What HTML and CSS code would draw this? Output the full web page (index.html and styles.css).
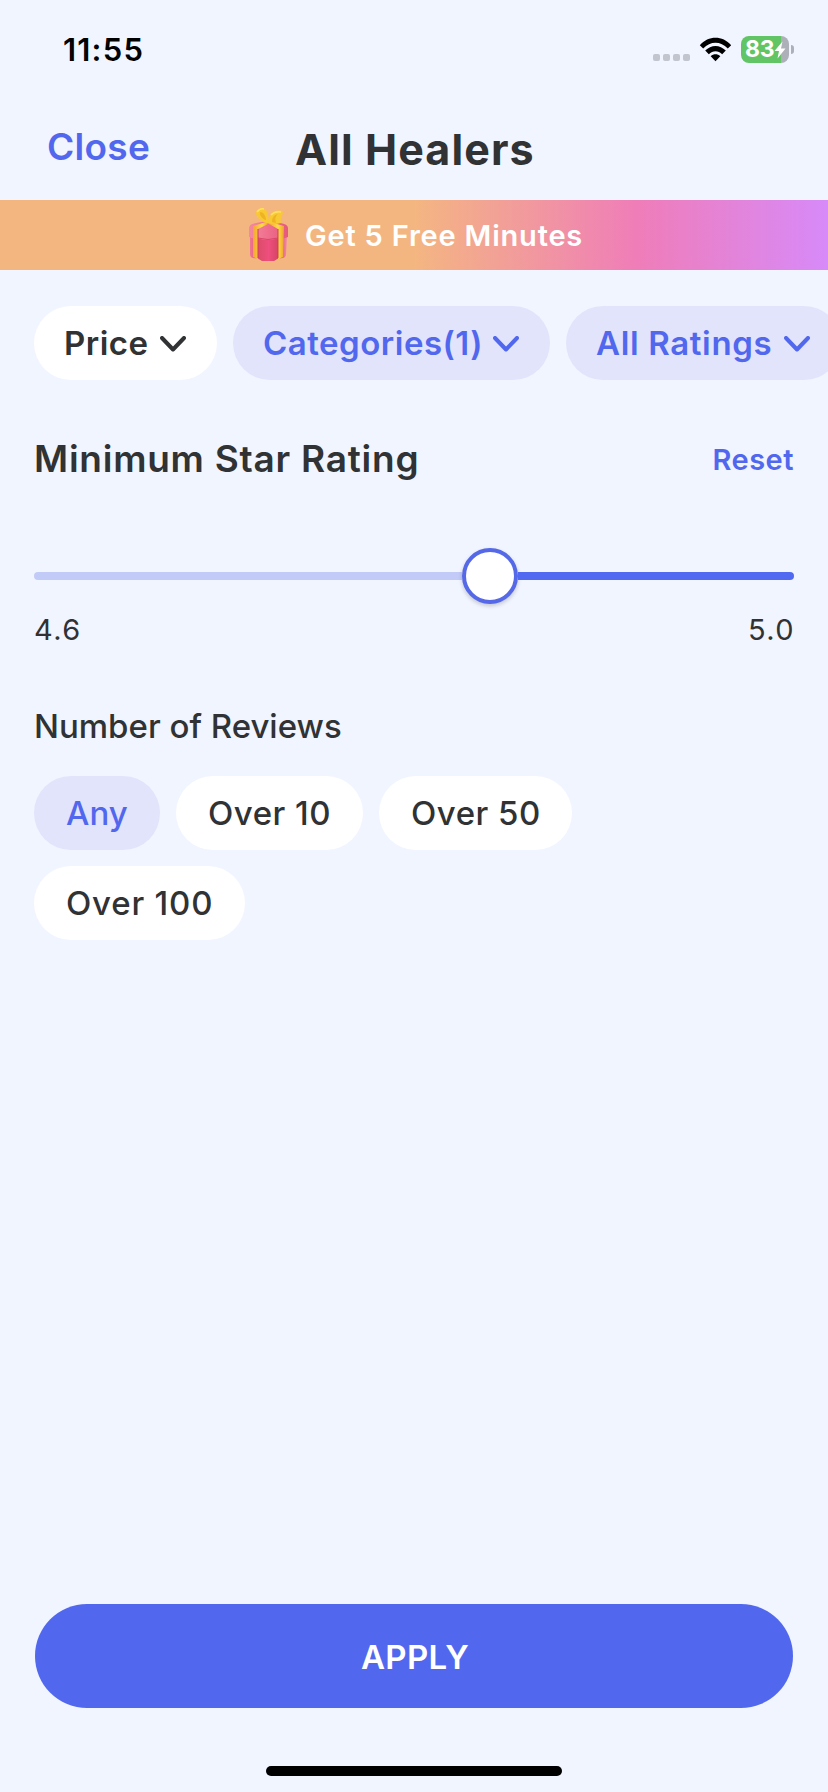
FILE: index.html
```html
<!DOCTYPE html>
<html lang="en">
<head>
<meta charset="utf-8">
<title>All Healers</title>
<link rel="stylesheet" href="styles.css">
</head>
<body>
<div class="screen">
  <div class="status">
    <span class="time">11:55</span>
    <div class="indicators">
      <div class="signal"><i></i><i></i><i></i><i></i></div>
      <svg class="wifi" viewBox="0 0 33 25" width="33" height="25">
        <path d="M0.8 8.2C9.5-1.7 23.5-1.7 32.2 8.2L28.8 11.6C21.6 3.8 11.4 3.8 4.2 11.6Z"/>
        <path d="M6.2 13.6C12 7.3 21 7.3 26.8 13.6L23.2 17.2C19.2 13.2 13.8 13.2 9.8 17.2Z"/>
        <path d="M11.7 19.2C14.5 16.6 18.5 16.6 21.3 19.2L16.5 24.2Z"/>
      </svg>
      <div class="battery">
        <div class="cell"><span>83</span>
          <svg viewBox="0 0 12 18" width="12" height="18"><path d="M8.5 0.5L0.5 10H5L3.5 17.5L11.5 7.5H7Z"/></svg>
        </div>
        <div class="tip"></div>
      </div>
    </div>
  </div>
  <header class="header">
    <a class="close">Close</a>
    <h1 class="title">All Healers</h1>
  </header>
  <div class="banner">
    <svg class="gift" viewBox="0 0 42 56" width="42" height="56">
      <defs>
        <linearGradient id="box" x1="0" x2="1"><stop offset="0" stop-color="#ef7894"/><stop offset=".25" stop-color="#dd4c6c"/><stop offset=".5" stop-color="#ee4f7c"/><stop offset=".75" stop-color="#d84468"/><stop offset="1" stop-color="#f08aa5"/></linearGradient>
        <linearGradient id="lid" x1="0" x2="1"><stop offset="0" stop-color="#f28aa0"/><stop offset=".45" stop-color="#f0708e"/><stop offset="1" stop-color="#e5597c"/></linearGradient>
        <linearGradient id="ribbon" x1="0" x2="1"><stop offset="0" stop-color="#f3a52f"/><stop offset=".6" stop-color="#ffdc48"/><stop offset="1" stop-color="#f0a32d"/></linearGradient>
      </defs>
      <path d="M3 29H40L39 48Q38 52 32 51L27 54H15L10 51Q4 52 3 48Z" fill="url(#box)"/>
      <path d="M2 21Q2 17 9 16L20 14L33 16Q41 17 41 21V30Q37 32 32 31Q21 35 10 31Q6 32 2 30Z" fill="url(#lid)"/>
      <path d="M11 31Q21 34 31 31" fill="none" stroke="#d84569"/>
      <path d="M6 19L19 15L21 17L11 22V52L6 50Z" fill="url(#ribbon)"/>
      <path d="M37 19L23 15L22 17L31 22V52L36 50Z" fill="url(#ribbon)"/>
      <path d="M11 22V51M31 22V51" fill="none" stroke="#cc3c55"/>
      <path d="M19 16C11 13 7 7 10 3C14-1 21 2 21 8L22 14C22 5 29 2 35 4C38 7 32 9 34 16Q27 18 19 16Z" fill="#f8c933"/>
      <path d="M18 13Q12 9 13 5Q18 5 19 13M25 15Q25 8 31 7Q27 10 29 16" fill="#efb223"/>
      <path d="M10 5Q13 1 17 2M24 8Q28 4 34 5" fill="none" stroke="#ffe160" stroke-width="1.5"/>
    </svg>
    <span>Get 5 Free Minutes</span>
  </div>
  <nav class="filters">
    <div class="filter price"><span>Price</span><svg class="chev" viewBox="0 0 26 16" width="26" height="16"><path d="M2 2L13 13.5L24 2"/></svg></div>
    <div class="filter categories on"><span>Categories(1)</span><svg class="chev" viewBox="0 0 26 16" width="26" height="16"><path d="M2 2L13 13.5L24 2"/></svg></div>
    <div class="filter ratings on"><span>All Ratings</span><svg class="chev" viewBox="0 0 26 16" width="26" height="16"><path d="M2 2L13 13.5L24 2"/></svg></div>
  </nav>
  <main class="content">
    <div class="section-head">
      <h2 class="heading">Minimum Star Rating</h2>
      <a class="reset">Reset</a>
    </div>
    <div class="slider"><div class="track"></div><div class="thumb"></div><div class="track active"></div></div>
    <div class="range"><span>4.6</span><span>5.0</span></div>
    <h3 class="subheading">Number of Reviews</h3>
    <div class="options">
      <div class="option any">Any</div>
      <div class="option ten">Over 10</div>
      <div class="option fifty">Over 50</div>
      <div class="option hundred">Over 100</div>
    </div>
  </main>
  <footer class="footer">
    <div class="apply"><span>APPLY</span></div>
    <div class="home"></div>
  </footer>
</div>
</body>
</html>
```
FILE: styles.css
```css
* { box-sizing: border-box; }
body { margin: 0; background: #f1f5ff; }
h1, h2, h3 { margin: 0; }
.screen {
  width: 828px; height: 1792px; overflow: hidden;
  display: flex; flex-direction: column;
  background: #f1f5ff; color: #303234;
  font-family: Inter, "Liberation Sans", sans-serif;
  white-space: nowrap;
}
.status { height: 100px; padding: 30px 34px 0 63px; display: flex; justify-content: space-between; align-items: flex-start; }
.time { color: #000; font-size: 31px; line-height: 40px; font-weight: 600; letter-spacing: 1.2px; }
.indicators { display: flex; align-items: center; height: 39px; }
.signal { display: flex; gap: 3px; margin: 16px 9px 0 0; }
.signal i { width: 7px; height: 7px; border-radius: 2px; background: #c2c5ce; }
.wifi { margin-right: 9px; }
.battery { display: flex; align-items: center; gap: 2px; }
.cell {
  width: 48px; height: 27px; border-radius: 8px; padding-left: 4px;
  display: flex; align-items: center;
  background: linear-gradient(90deg, #62c565 40px, #adb0b9 40px);
  color: #fff; font-size: 23px; font-weight: 700; line-height: 27px; letter-spacing: -0.3px;
}
.cell svg { fill: #fff; flex: none; }
.tip { width: 3px; height: 9px; border-radius: 0 4px 4px 0; background: #adb0b9; }
.header { height: 100px; padding-left: 47px; display: grid; grid-template-columns: 248px auto; justify-content: start; }
.close { color: #5168ee; font-size: 37px; font-weight: 600; line-height: 48px; padding-top: 23px; letter-spacing: 0.3px; }
.title { font-size: 43px; font-weight: 700; line-height: 52px; padding-top: 23px; letter-spacing: 1.1px; }
.banner {
  height: 70px; padding-left: 247px; display: flex; align-items: center; gap: 16px;
  background: linear-gradient(90deg, #f4b681 0%, #f4b681 50%, #ef7db9 77%, #d78af9 100%);
  color: #fff; font-size: 29px; font-weight: 600; letter-spacing: 0.8px;
}
.filters { display: flex; gap: 16px; padding: 36px 0 0 34px; height: 110px; }
.filter {
  flex: none; height: 74px; border-radius: 37px; background: #fff; padding: 0 31px 0 30px;
  display: flex; align-items: center; justify-content: space-between;
  font-size: 33px; font-weight: 600; letter-spacing: 0.5px;
}
.price { width: 183px; }
.categories { width: 317px; }
.ratings { width: 275px; letter-spacing: 0.65px; }
.on { background: #e1e4fb; color: #5168ee; }
.chev { fill: none; stroke: currentColor; stroke-width: 4; stroke-linecap: round; stroke-linejoin: round; margin-top: 1px; }
.content { padding: 54px 34px 0; }
.section-head { display: flex; justify-content: space-between; align-items: center; height: 50px; }
.heading { font-size: 37px; font-weight: 600; letter-spacing: 0.75px; padding-bottom: 2px; }
.reset { color: #5168ee; font-size: 29px; font-weight: 600; letter-spacing: 0.5px; }
.slider { display: flex; align-items: center; height: 56px; margin-top: 64px; }
.track { width: 428px; height: 8px; background: #c2caf8; border-radius: 4px 0 0 4px; }
.active { width: 276px; background: #5069f0; border-radius: 0 4px 4px 0; }
.thumb { width: 56px; height: 56px; border: 4px solid #5569e8; border-radius: 50%; background: #fff; box-shadow: 0 2px 4px #0003; }
.range { display: flex; justify-content: space-between; height: 50px; align-items: center; font-size: 29px; font-weight: 400; letter-spacing: 1.4px; margin-right: -1px; }
.subheading { font-size: 33px; font-weight: 500; line-height: 40px; margin-top: 52px; }
.options { display: flex; flex-wrap: wrap; gap: 16px; margin-top: 30px; width: 600px; }
.option { height: 74px; border-radius: 37px; padding-left: 32px; background: #fff; font-size: 33px; font-weight: 500; line-height: 74px; letter-spacing: 0.5px; }
.any { width: 126px; background: #e1e4fb; color: #5168ee; letter-spacing: 0; }
.ten { width: 187px; }
.fifty { width: 193px; }
.hundred { width: 211px; letter-spacing: 0.8px; }
.footer { margin-top: auto; height: 188px; display: flex; flex-direction: column; align-items: center; }
.apply { width: 758px; height: 104px; border-radius: 52px; background: #5168ee; color: #fff; display: flex; align-items: center; justify-content: center; font-size: 33px; font-weight: 600; letter-spacing: 0.3px; padding: 2px 0 0 2px; }
.home { width: 296px; height: 10px; border-radius: 5px; background: #000; margin-top: 58px; }
```
